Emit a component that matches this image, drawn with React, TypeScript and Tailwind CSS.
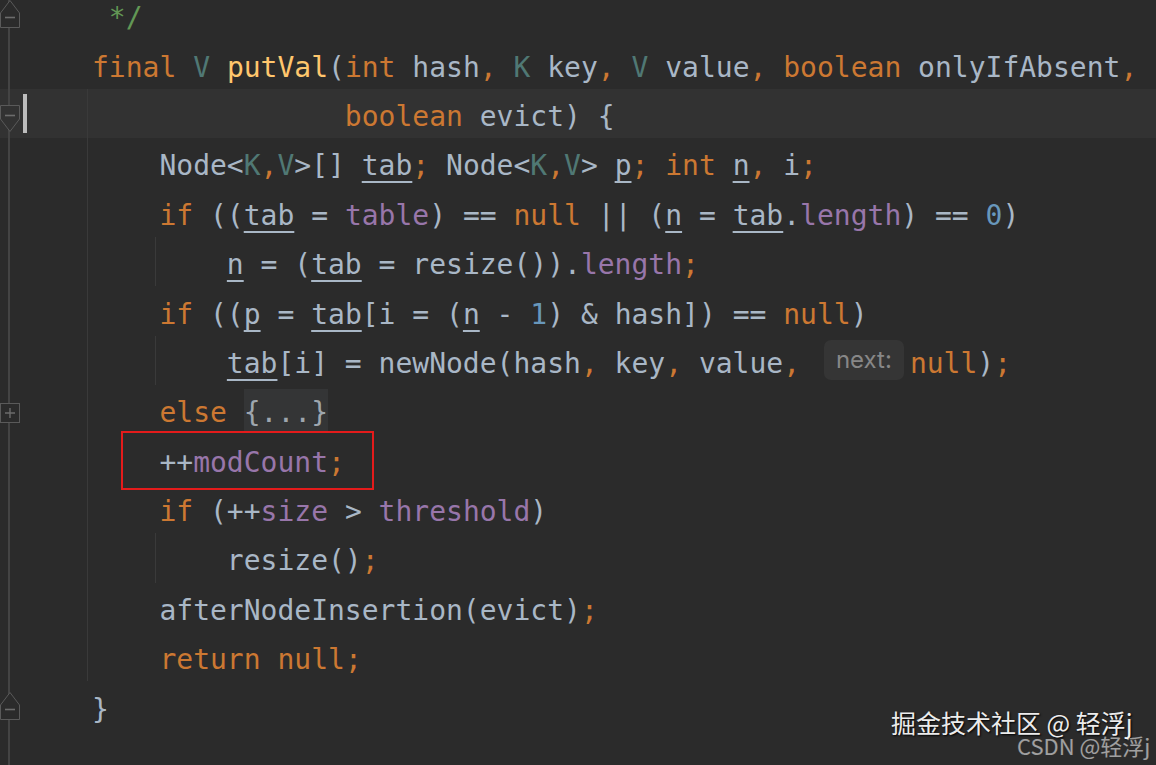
import React from "react";

type Kind = "kw" | "pl" | "tp" | "fn" | "fd" | "nm" | "cm" | "ul" | "hint" | "fold";
type Tok = [string, Kind];

const cls: Record<Kind, string> = {
  kw: "text-[#CC7832]",
  pl: "text-[#A9B7C6]",
  tp: "text-[#507874]",
  fn: "text-[#FFC66D]",
  fd: "text-[#9876AA]",
  nm: "text-[#6897BB]",
  cm: "text-[#629755]",
  ul: "text-[#A9B7C6] underline decoration-[1.5px] underline-offset-[6px]",
  hint: "",
  fold: "",
};

interface Line {
  toks: Tok[];
  body?: boolean;
  guide?: boolean;
  marker?: "end" | "start" | "plus" | "end2";
  current?: boolean;
  boxed?: boolean;
}

const lines: Line[] = [
  { toks: [[" */", "cm"]], marker: "end" },
  {
    toks: [
      ["final ", "kw"], ["V ", "tp"], ["putVal", "fn"], ["(", "pl"], ["int ", "kw"], ["hash", "pl"], [", ", "kw"],
      ["K ", "tp"], ["key", "pl"], [", ", "kw"], ["V ", "tp"], ["value", "pl"], [", ", "kw"],
      ["boolean ", "kw"], ["onlyIfAbsent", "pl"], [",", "kw"],
    ],
  },
  { toks: [["               boolean ", "kw"], ["evict) {", "pl"]], body: true, marker: "start", current: true },
  {
    toks: [
      ["    Node<", "pl"], ["K", "tp"], [",", "kw"], ["V", "tp"], [">[] ", "pl"], ["tab", "ul"], ["; ", "kw"],
      ["Node<", "pl"], ["K", "tp"], [",", "kw"], ["V", "tp"], ["> ", "pl"], ["p", "ul"], ["; ", "kw"],
      ["int ", "kw"], ["n", "ul"], [", ", "kw"], ["i", "pl"], [";", "kw"],
    ],
    body: true,
  },
  {
    toks: [
      ["    if ", "kw"], ["((", "pl"], ["tab", "ul"], [" = ", "pl"], ["table", "fd"], [") == ", "pl"], ["null", "kw"],
      [" || (", "pl"], ["n", "ul"], [" = ", "pl"], ["tab", "ul"], [".", "pl"], ["length", "fd"], [") == ", "pl"],
      ["0", "nm"], [")", "pl"],
    ],
    body: true,
  },
  {
    toks: [
      ["        ", "pl"], ["n", "ul"], [" = (", "pl"], ["tab", "ul"], [" = resize()).", "pl"], ["length", "fd"], [";", "kw"],
    ],
    body: true,
    guide: true,
  },
  {
    toks: [
      ["    if ", "kw"], ["((", "pl"], ["p", "ul"], [" = ", "pl"], ["tab", "ul"], ["[i = (", "pl"], ["n", "ul"],
      [" - ", "pl"], ["1", "nm"], [") & hash]) == ", "pl"], ["null", "kw"], [")", "pl"],
    ],
    body: true,
  },
  {
    toks: [
      ["        ", "pl"], ["tab", "ul"], ["[i] = newNode(hash", "pl"], [", ", "kw"], ["key", "pl"], [", ", "kw"],
      ["value", "pl"], [", ", "kw"], ["next:", "hint"], ["null", "kw"], [")", "pl"], [";", "kw"],
    ],
    body: true,
    guide: true,
  },
  { toks: [["    else ", "kw"], ["{...}", "fold"]], body: true, marker: "plus" },
  { toks: [["    ++", "pl"], ["modCount", "fd"], [";", "kw"]], body: true, boxed: true },
  {
    toks: [["    if ", "kw"], ["(++", "pl"], ["size", "fd"], [" > ", "pl"], ["threshold", "fd"], [")", "pl"]],
    body: true,
  },
  { toks: [["        resize()", "pl"], [";", "kw"]], body: true, guide: true },
  { toks: [["    afterNodeInsertion(evict)", "pl"], [";", "kw"]], body: true },
  { toks: [["    return null", "kw"], [";", "kw"]], body: true },
  { toks: [["}", "pl"]], marker: "end2" },
];

function Marker({ kind, fill }: { kind: string; fill: string }) {
  const stroke = "#5a5a5a";
  if (kind === "plus") {
    return (
      <svg width="22" height="22" className="absolute left-0 top-[18px]">
        <rect x="0.5" y="0.5" width="19" height="19" fill={fill} stroke={stroke} />
        <path d="M5 10 H15 M10 5 V15" stroke="#6c6c6c" strokeWidth="1.4" />
      </svg>
    );
  }
  if (kind === "start") {
    return (
      <svg width="22" height="30" className="absolute left-0 top-[16px]">
        <path d="M0.5 0.5 H19.5 V14 L10 26.5 L0.5 14 Z" fill={fill} stroke={stroke} />
        <path d="M5 10.5 H15" stroke="#6c6c6c" strokeWidth="1.6" />
      </svg>
    );
  }
  return (
    <svg width="22" height="30" className={kind === "end" ? "absolute left-0 top-[10px]" : "absolute left-0 top-[11px]"}>
      <path d="M0.5 13 L10 0.5 L19.5 13 V27.5 H0.5 Z" fill={fill} stroke={stroke} />
      <path d="M5 17.5 H15" stroke="#6c6c6c" strokeWidth="1.6" />
    </svg>
  );
}

function Row({ line }: { line: Line }) {
  const bg = line.current ? "#323232" : "#2b2b2b";
  return (
    <div className={`relative flex h-[49.4px] shrink-0 ${line.current ? "bg-[#323232]" : ""}`}>
      <div className="relative h-full w-[87px] shrink-0">
        <div className="absolute left-[8px] top-0 bottom-0 w-[2px] bg-[#444444]" />
        {line.marker && <Marker kind={line.marker} fill={bg} />}
        {line.current && <div className="absolute left-[23px] top-[5px] h-[39px] w-[4px] bg-[#bdbdbd]" />}
      </div>
      <div
        className={`relative flex h-full flex-1 items-center whitespace-pre border-l pl-[4px] pt-[7px] ${
          line.body ? "border-[#3a3a3a]" : "border-transparent"
        }`}
      >
        {line.guide && <div className="absolute left-[67px] top-0 bottom-0 w-px bg-[#3a3a3a]" />}
        {line.toks.map(([text, kind], i) => {
          if (kind === "hint") {
            return (
              <span
                key={i}
                className="ml-[7px] mr-[6px] -mt-[7px] flex h-[40px] items-center rounded-[7px] bg-[#353535] px-[12px] font-['Inter',sans-serif] text-[24px] text-[#878787]"
              >
                {text}
              </span>
            );
          }
          if (kind === "fold") {
            return (
              <span key={i} className="-mt-[7px] flex h-[42px] items-center bg-[#343536] pt-[7px] text-[#9ea6ae]">
                {text}
              </span>
            );
          }
          return (
            <span key={i} className={cls[kind]}>
              {text}
            </span>
          );
        })}
      </div>
      {line.boxed && (
        <div className="absolute left-[121px] top-[-4px] h-[59px] w-[253px] border-2 border-[#e41b1b]" />
      )}
    </div>
  );
}

export default function App() {
  return (
    <div className="relative flex h-[765px] w-[1156px] flex-col overflow-hidden bg-[#2b2b2b] font-['DejaVu_Sans_Mono',monospace] text-[28px] leading-none">
      <div className="-mt-[10px] flex flex-col">
        {lines.map((line, i) => (
          <Row key={i} line={line} />
        ))}
      </div>
      <div className="relative flex-1">
        <div className="absolute left-[8px] top-0 bottom-0 w-[2px] bg-[#444444]" />
      </div>
      <div className="absolute left-[891px] top-[710px] font-['Noto_Sans_CJK_SC',sans-serif] text-[25px] leading-none text-[#ececec] [text-shadow:1px_1px_2px_#000]">
        掘金技术社区 @ 轻浮j
      </div>
      <div className="absolute left-[1017px] top-[734px] font-['Noto_Sans_CJK_SC',sans-serif] text-[22px] leading-none text-[#ffffff]/55">
        CSDN @轻浮j
      </div>
    </div>
  );
}
